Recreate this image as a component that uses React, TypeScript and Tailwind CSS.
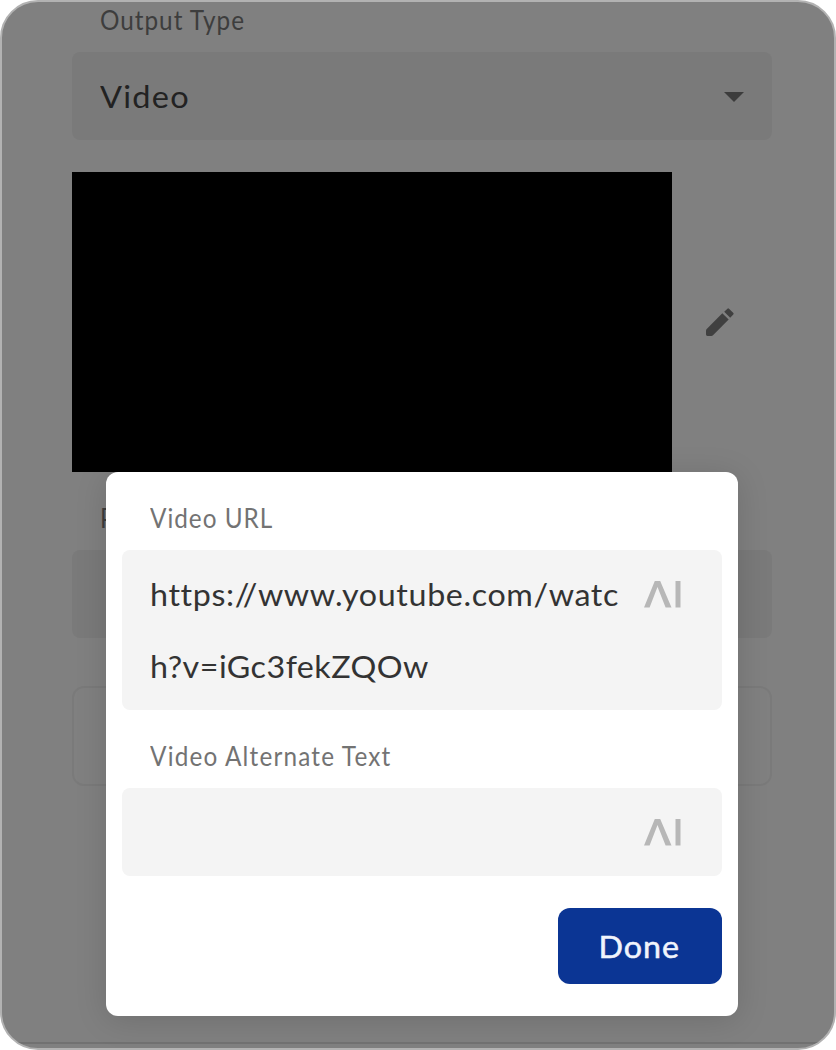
import type { ReactNode } from 'react';

function Label({ children, className = 'tracking-[1.1px]' }: { children: ReactNode; className?: string }) {
  return (
    <div className={`h-8 origin-left scale-x-[0.9] whitespace-nowrap text-[27px] leading-8 ${className}`}>
      {children}
    </div>
  );
}

function AiIcon() {
  return (
    <svg className="h-[28px] w-[38px] shrink-0" viewBox="0 0 38 28" fill="#b7b7b7" aria-hidden="true">
      <path d="M0 27.5 L10.8 1 H16.2 L27.5 27.5 H21.6 L13.5 7 L5.6 27.5Z" />
      <rect x="31.5" y="1" width="5" height="26.5" />
    </svg>
  );
}

export default function App() {
  return (
    <div className="h-[1050px] w-[836px] bg-white font-['Lato','Liberation_Sans',sans-serif]">
      <div className="relative h-[1050px] w-[836px] overflow-hidden rounded-[38px] border-2 border-[#b2b2b2] bg-[#808080]">
        <main className="flex h-full flex-col pr-[62px] pl-[70px]">
          <div className="mt-[2px] pl-7 text-[#3d3d3d]">
            <Label>Output Type</Label>
          </div>
          <div className="mt-4 flex h-[88px] shrink-0 items-center justify-between rounded-lg bg-[#7a7a7a] pr-7 pl-7">
            <span className="origin-left scale-x-[1.05] text-[31px] leading-10 tracking-[1.2px] text-[#222222]">
              Video
            </span>
            <svg className="mt-[2px] h-[10px] w-5" viewBox="0 0 20 10" fill="#3c3c3c" aria-hidden="true">
              <path d="M0 0H20L10 10Z" />
            </svg>
          </div>
          <div className="mt-8 flex h-[300px] shrink-0 items-center">
            <div className="h-full w-[600px] bg-black" />
            <svg className="ml-[34px] size-7" viewBox="0 0 28 28" fill="#404040" aria-hidden="true">
              <path d="M0 22.6 Q0 21.6 .7 20.9 L16.3 5.3 L22.7 11.5 L7 27.3 Q6.3 28 5.3 28 H1.4 Q0 28 0 26.6Z" />
              <path d="M18.2 3.8 L21.4 .7 Q22.2 0 23 .7 L27.4 5 Q28 5.7 27.3 6.4 L24.2 9.7Z" />
            </svg>
          </div>
          <div className="mt-[30px] pl-7 text-[#3d3d3d]">
            <Label>P</Label>
          </div>
          <div className="mt-4 h-[88px] shrink-0 rounded-lg bg-[#7a7a7a]" />
          <div className="mt-12 h-[100px] shrink-0 rounded-xl border-2 border-[#7a7a7a]" />
        </main>
        <div className="absolute right-0 bottom-[4px] left-0 h-[2px] bg-[#717171]" />
        <section className="absolute top-[470px] left-[104px] flex h-[544px] w-[632px] flex-col rounded-xl bg-white px-4 shadow-[0_4px_32px_rgba(0,0,0,0.14)]">
          <div className="mt-[30px] pl-7 text-[#737373]">
            <Label>Video URL</Label>
          </div>
          <div className="mt-4 flex h-[160px] shrink-0 justify-between rounded-lg bg-[#f4f4f4] pt-2 pr-10 pl-7">
            <div className="origin-left scale-x-[1.04] text-[31px] leading-[72px] whitespace-nowrap text-[#333333]">
              <div className="tracking-[0.6px]">https://www.youtube.com/watc</div>
              <div className="tracking-[0.45px]">h?v=iGc3fekZQOw</div>
            </div>
            <div className="pt-[22px]">
              <AiIcon />
            </div>
          </div>
          <div className="mt-[30px] pl-7 text-[#737373]">
            <Label className="tracking-[1.32px]">Video Alternate Text</Label>
          </div>
          <div className="mt-4 flex h-[88px] shrink-0 items-center justify-end rounded-lg bg-[#f4f4f4] pr-10">
            <AiIcon />
          </div>
          <button className="mt-8 flex h-[76px] w-[164px] shrink-0 items-center justify-center self-end rounded-xl bg-[#0b3594] pt-px pr-[2px] text-[31px] text-[#f1f4fc]">
            <span className="scale-x-[1.04] tracking-[1px] [-webkit-text-stroke:0.5px_#f1f4fc]">Done</span>
          </button>
        </section>
      </div>
    </div>
  );
}
